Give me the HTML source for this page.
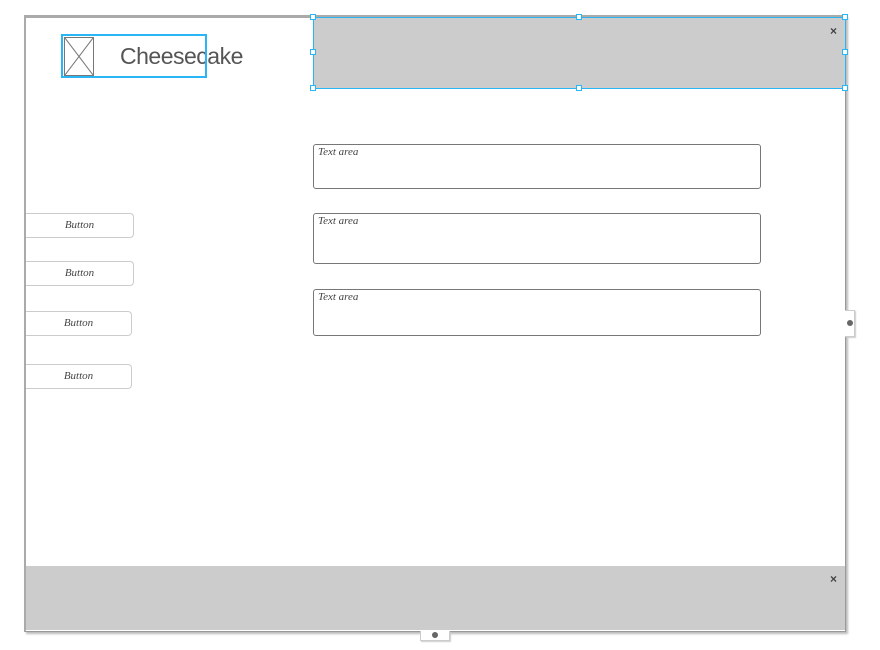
<!DOCTYPE html>
<html><head><meta charset="utf-8"><style>
*{margin:0;padding:0;box-sizing:border-box}
body{width:880px;height:650px;background:#fff;position:relative;overflow:hidden;font-family:"Liberation Sans",sans-serif}
.frame{position:absolute;left:24px;top:15px;width:822px;height:617px;background:#fff;border:1px solid #999;border-top:3px solid #aaa;border-left:2px solid #aaa;box-shadow:2px 2px 2px #bbb}
.abs{position:absolute}
.h{position:absolute;width:6px;height:6px;background:#fff;border:1px solid #29b6f6}
.btn{position:absolute;left:26px;height:25px;border:1px solid #ccc;border-left:none;border-radius:0 4px 4px 0;font-family:"Liberation Serif",serif;font-style:italic;font-size:11px;color:#444;text-align:center;line-height:22px;background:#fff}
.ta{position:absolute;left:313px;width:448px;border:1px solid #777;border-radius:3px;font-family:"Liberation Serif",serif;font-style:italic;font-size:11px;color:#444;padding:0 0 0 4px;line-height:14px;background:#fff}
</style></head><body>
<div class="frame"></div>
<div class="abs" style="left:64px;top:37px;width:30px;height:39px;border:1px solid #777">
<svg width="28" height="37" style="position:absolute;left:0;top:0"><line x1="0" y1="0" x2="28" y2="37" stroke="#777"/><line x1="28" y1="0" x2="0" y2="37" stroke="#777"/></svg></div>
<div class="abs" style="left:120px;top:43px;font-size:23px;color:#555;letter-spacing:-0.5px">Cheesecake</div>
<div class="abs" style="left:61px;top:34px;width:146px;height:44px;border:2px solid #29b6f6"></div>
<div class="abs" style="left:313px;top:17px;width:533px;height:72px;background:#ccc;border:1.5px solid #29b6f6"></div>
<div class="abs" style="left:830px;top:24px;font-size:12px;font-weight:bold;color:#444">×</div>
<div class="h" style="left:310px;top:14px"></div><div class="h" style="left:576px;top:14px"></div><div class="h" style="left:842px;top:14px"></div>
<div class="h" style="left:310px;top:49px"></div><div class="h" style="left:842px;top:49px"></div>
<div class="h" style="left:310px;top:85px"></div><div class="h" style="left:576px;top:85px"></div><div class="h" style="left:842px;top:85px"></div>
<div class="btn" style="top:213px;width:108px">Button</div>
<div class="btn" style="top:261px;width:108px">Button</div>
<div class="btn" style="top:311px;width:106px">Button</div>
<div class="btn" style="top:364px;width:106px">Button</div>
<div class="ta" style="top:144px;height:45px">Text area</div>
<div class="ta" style="top:213px;height:51px">Text area</div>
<div class="ta" style="top:289px;height:47px">Text area</div>
<div class="abs" style="left:26px;top:566px;width:819px;height:64px;background:#ccc"></div>
<div class="abs" style="left:830px;top:572px;font-size:12px;font-weight:bold;color:#444">×</div>
<div class="abs" style="left:845px;top:310px;width:10px;height:27px;background:#fff;border:1px solid #ccc;border-left:none;box-shadow:1px 1px 1px #ccc"></div>
<div class="abs" style="left:847px;top:320px;width:6px;height:6px;border-radius:50%;background:#666"></div>
<div class="abs" style="left:420px;top:631px;width:30px;height:10px;background:#fff;border:1px solid #ccc;border-top:none;box-shadow:1px 1px 1px #ccc"></div>
<div class="abs" style="left:432px;top:632px;width:6px;height:6px;border-radius:50%;background:#666"></div>
</body></html>
